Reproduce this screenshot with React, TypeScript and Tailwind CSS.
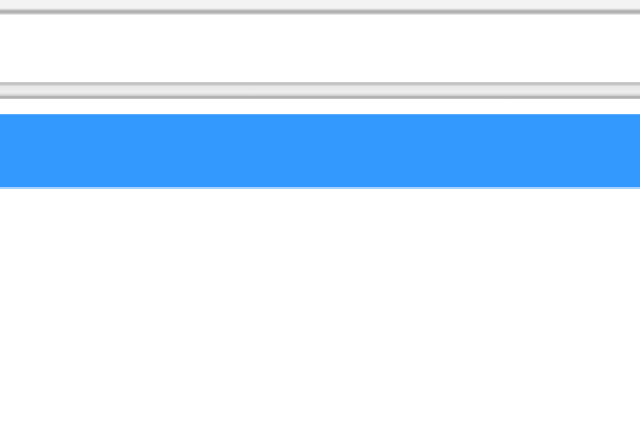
export default function App() {
  return (
    <div className="flex h-[427px] w-[640px] flex-col overflow-hidden bg-white">
      {/* top strip */}
      <div className="h-[8px] bg-[#f3f3f3]" />
      <div className="h-[7px] bg-[linear-gradient(to_bottom,#f8f8f8,#c4c4c4_30%,#a9a9a9_55%,#c8c8c8_80%,#f4f4f4)]" />
      <div className="h-[67px] bg-white" />
      {/* middle bar */}
      <div className="h-[17px] bg-[linear-gradient(to_bottom,#cfcfcf,#bdbdbd_12%,#e6e6e6_25%,#eeeeee_60%,#d6d6d6_78%,#a8a8a8_88%,#c9c9c9)]" />
      <div className="h-[15px] bg-white" />
      {/* blue bar */}
      <div className="h-[1px] bg-[#5aaeff]" />
      <div className="h-[72px] bg-[#3399ff]" />
      <div className="h-[2px] bg-[#a6d2ff]" />
      <div className="flex-1 bg-white" />
    </div>
  );
}
